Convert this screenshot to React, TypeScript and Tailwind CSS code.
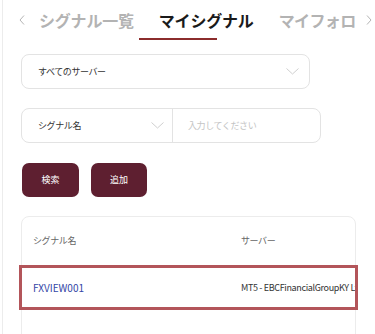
const font = { fontFamily: '"Noto Sans CJK JP", "Noto Sans", sans-serif' }

function Chevron({ dir }: { dir: 'left' | 'right' | 'down' }) {
  if (dir === 'down') {
    return (
      <svg width="13" height="7" viewBox="0 0 13 7" fill="none" className="shrink-0">
        <path d="M0.5 0.5L6.5 6L12.5 0.5" stroke="#cfcfcf" strokeWidth="1" />
      </svg>
    )
  }
  return (
    <svg width="6" height="10" viewBox="0 0 6 10" fill="none" className="shrink-0">
      <path
        d={dir === 'left' ? 'M5 0.5L1 5L5 9.5' : 'M1 0.5L5 5L1 9.5'}
        stroke="#b5b5b5"
        strokeWidth="1"
      />
    </svg>
  )
}

export default function App() {
  return (
    <div className="w-[375px] h-[334px] overflow-hidden bg-white" style={font}>
      <div className="ml-[2px] h-full border-l border-[#ececec]">
        {/* Tabs */}
        <div className="flex items-center h-[38px] pt-[1px] text-[16px] font-bold leading-none whitespace-nowrap">
          <span className="ml-[16px] shrink-0"><Chevron dir="left" /></span>
          <span className="ml-[14px] shrink-0 tracking-[-0.2px] text-[#b3b3b3]">シグナル一覧</span>
          <span className="ml-[25px] shrink-0 tracking-[-0.2px] text-[#1a1a1a]">マイシグナル</span>
          <span className="ml-[25px] shrink-0 tracking-[-0.6px] text-[#b3b3b3]">マイフォロ</span>
          <span className="ml-[10px] shrink-0"><Chevron dir="right" /></span>
        </div>
        <div className="ml-[136px] w-[78px] h-[2px] bg-[#8b2c2c]" />

        {/* Filters */}
        <div className="pl-[18px] pt-[14px]">
          <div className="flex items-center justify-between w-[289px] h-[35px] rounded-[8px] border border-[#e3e3e3] pl-[16px] pr-[10px]">
            <span className="text-[9px] tracking-[-0.4px] text-[#333]">すべてのサーバー</span>
            <Chevron dir="down" />
          </div>

          <div className="flex items-center w-[300px] h-[35px] mt-[19px] rounded-[8px] border border-[#e3e3e3]">
            <div className="flex items-center justify-between w-[151px] h-full pl-[16px] pr-[8px] border-r border-[#e3e3e3]">
              <span className="text-[9px] tracking-[-0.4px] text-[#333]">シグナル名</span>
              <Chevron dir="down" />
            </div>
            <span className="pl-[15px] text-[9px] tracking-[-0.4px] text-[#c4c4c4]">入力してください</span>
          </div>

          <div className="flex gap-[12px] mt-[20px] ml-[1px]">
            <button className="w-[57px] h-[34px] rounded-[7px] bg-[#5e1f30] text-white text-[9px]">検索</button>
            <button className="w-[56px] h-[34px] rounded-[7px] bg-[#5e1f30] text-white text-[9px]">追加</button>
          </div>

          {/* Table */}
          <div className="w-[335px] h-[140px] mt-[19px] rounded-[8px] border border-[#ececec]">
            <div className="flex items-center h-[48px] text-[9px] tracking-[-0.4px] text-[#666]">
              <span className="pl-[11px] w-[219px] shrink-0">シグナル名</span>
              <span>サーバー</span>
            </div>
            <div className="flex items-center h-[45px] -mx-[3px] border-[3px] border-[#b3555a] overflow-hidden whitespace-nowrap">
              <span className="pl-[11px] w-[219px] shrink-0 text-[10px] text-[#3446a6]">FXVIEW001</span>
              <span className="text-[9px] tracking-[-0.35px] text-[#333]">MT5 - EBCFinancialGroupKY Ltd</span>
            </div>
          </div>
        </div>
      </div>
    </div>
  )
}
